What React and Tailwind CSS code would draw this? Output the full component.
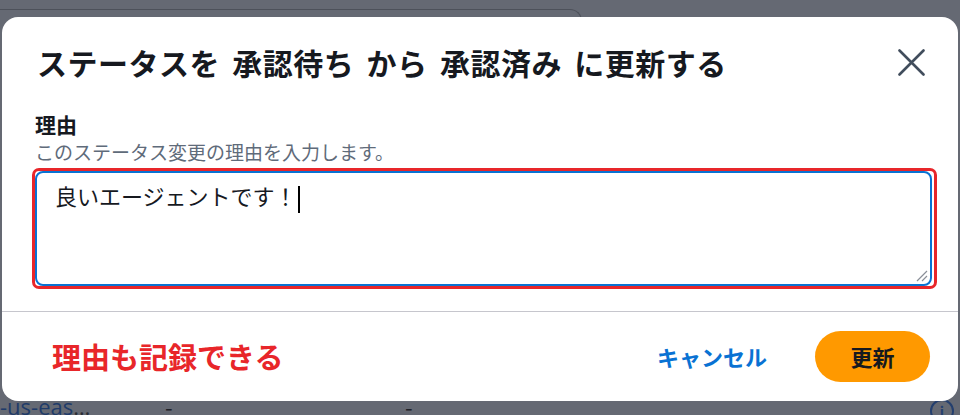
import React from "react";

export default function App() {
  return (
    <div className="relative h-[415px] w-[960px] overflow-hidden bg-[#656973] font-['Noto_Sans_CJK_JP','Noto_Sans',sans-serif]">
      {/* page behind the overlay */}
      <div className="flex flex-col pt-[9px]">
        <div className="h-[386px] w-[582px] rounded-tr-[12px] border-t border-r border-[#4d515a]" />
        <div className="flex h-[20px] items-start text-[22px] leading-[22px]">
          <span className="w-[165px] shrink-0 font-['Open_Sans',sans-serif] text-[#1f3b69]">
            -us-eas<span className="text-[#2a2d33]">…</span>
          </span>
          <span className="w-[240px] shrink-0 text-[#1e2128]">-</span>
          <span className="flex-1 text-[#1e2128]">-</span>
          <span className="mr-[6px] mt-[4px] flex h-[24px] w-[24px] items-start justify-center rounded-full border-2 border-[#243f6e] text-[14px] font-bold leading-[20px] text-[#243f6e]">
            i
          </span>
        </div>
      </div>

      {/* modal */}
      <div className="absolute left-[2px] top-[17px] flex h-[384px] w-[956px] flex-col rounded-[16px] bg-white">
        <div className="mt-[25px] flex h-[40px] items-center justify-between pl-[35px] pr-[33px]">
          <h2 className="text-[30px] font-bold leading-[40px] tracking-[0.5px] text-[#16191f] [word-spacing:5px]">
            ステータスを 承認待ち から 承認済み に更新する
          </h2>
          <button aria-label="閉じる" className="flex h-[27px] w-[27px] items-center justify-center">
            <svg width="27" height="27" viewBox="0 0 27 27" fill="none">
              <path d="M1.5 1.5 25.5 25.5M25.5 1.5 1.5 25.5" stroke="#414d5c" strokeWidth="2.6" strokeLinecap="round" />
            </svg>
          </button>
        </div>

        <div className="mt-[27px] px-[30px]">
          <div className="pl-[3px]">
            <label className="block text-[21px] font-bold leading-[30px] text-[#16191f]">理由</label>
            <p className="text-[19px] leading-[26px] text-[#5f6b7a]">このステータス変更の理由を入力します。</p>
          </div>
          <div className="mt-[3px] w-[905px] rounded-[7px] border-[3px] border-[#e8262a] pr-[2px]">
            <div className="relative h-[115px] rounded-[8px] border-2 border-[#0972d3] px-[18px] py-[6px] text-[22px] leading-[33px] text-[#16191f]">
              良いエージェントです！
              <span className="ml-[1px] inline-block h-[27px] w-[2px] bg-black align-middle" />
              <svg className="absolute bottom-[2px] right-[2px]" width="12" height="12" viewBox="0 0 12 12" fill="none">
                <path d="M11 1 1 11M11 6 6 11" stroke="#8a8f98" strokeWidth="1.2" />
              </svg>
            </div>
          </div>
        </div>

        <div className="mt-[22px] flex flex-1 items-center justify-between border-t border-[#c6c6cd] pl-[50px] pr-[28px]">
          <span className="text-[29px] font-bold text-[#e8262a]">理由も記録できる</span>
          <div className="flex items-center gap-[48px]">
            <button className="text-[22px] font-bold text-[#0972d3]">キャンセル</button>
            <button className="h-[51px] w-[115px] rounded-full bg-[#ff9900] text-[22px] font-bold text-[#16191f]">
              更新
            </button>
          </div>
        </div>
      </div>
    </div>
  );
}
